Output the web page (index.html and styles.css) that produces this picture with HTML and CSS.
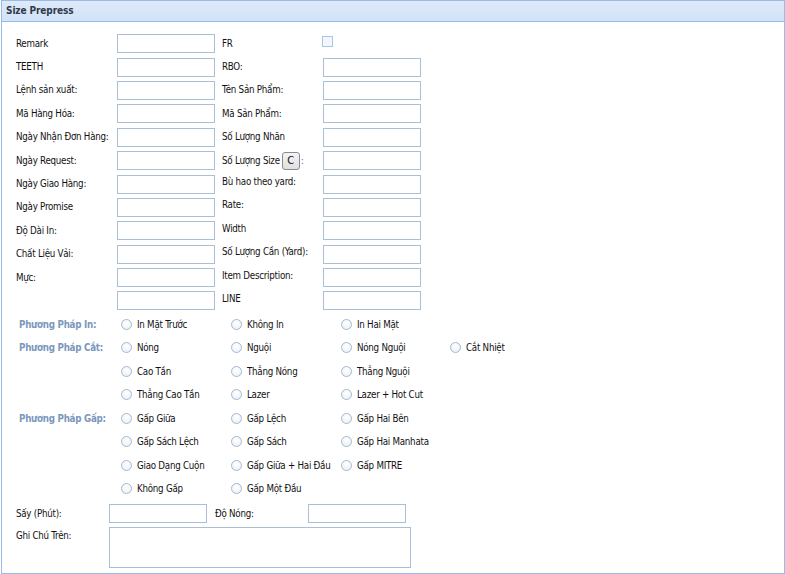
FILE: index.html
```html
<!DOCTYPE html>
<html lang="vi">
<head>
<meta charset="utf-8">
<title>Size Prepress</title>
<link rel="stylesheet" href="styles.css">
</head>
<body>
<div class="panel">
  <div class="panel-header">Size Prepress</div>
  <div class="panel-body">
    <div class="fields">
      <label class="lbl">Remark</label><input class="txt" type="text">
      <label class="lbl lbl-r">FR</label><span class="chk"></span>
      <label class="lbl">TEETH</label><input class="txt" type="text">
      <label class="lbl lbl-r">RBO:</label><input class="txt" type="text">
      <label class="lbl">Lệnh sản xuất:</label><input class="txt" type="text">
      <label class="lbl lbl-r">Tên Sản Phẩm:</label><input class="txt" type="text">
      <label class="lbl">Mã Hàng Hóa:</label><input class="txt" type="text">
      <label class="lbl lbl-r">Mã Sản Phẩm:</label><input class="txt" type="text">
      <label class="lbl">Ngày Nhận Đơn Hàng:</label><input class="txt" type="text">
      <label class="lbl lbl-r">Số Lượng Nhãn</label><input class="txt" type="text">
      <label class="lbl">Ngày Request:</label><input class="txt" type="text">
      <label class="lbl lbl-r lbl-btn">Số Lượng Size <span class="btn">C</span><span class="colon">:</span></label><input class="txt" type="text">
      <label class="lbl">Ngày Giao Hàng:</label><input class="txt" type="text">
      <label class="lbl lbl-r up">Bù hao theo yard:</label><input class="txt" type="text">
      <label class="lbl">Ngày Promise</label><input class="txt" type="text">
      <label class="lbl lbl-r up">Rate:</label><input class="txt" type="text">
      <label class="lbl">Độ Dài In:</label><input class="txt" type="text">
      <label class="lbl lbl-r up">Width</label><input class="txt" type="text">
      <label class="lbl">Chất Liệu Vải:</label><input class="txt" type="text">
      <label class="lbl lbl-r up">Số Lượng Cần (Yard):</label><input class="txt" type="text">
      <label class="lbl">Mực:</label><input class="txt" type="text">
      <label class="lbl lbl-r up">Item Description:</label><input class="txt" type="text">
      <label class="lbl"></label><input class="txt" type="text">
      <label class="lbl lbl-r up">LINE</label><input class="txt" type="text">
    </div>

    <div class="radios">
      <div class="grp">Phương Pháp In:</div>
      <div class="opt"><span class="rd"></span>In Mặt Trước</div>
      <div class="opt"><span class="rd"></span>Không In</div>
      <div class="opt"><span class="rd"></span>In Hai Mặt</div>
      <div class="opt"></div>

      <div class="grp">Phương Pháp Cắt:</div>
      <div class="opt"><span class="rd"></span>Nóng</div>
      <div class="opt"><span class="rd"></span>Nguội</div>
      <div class="opt"><span class="rd"></span>Nóng Nguội</div>
      <div class="opt"><span class="rd"></span>Cắt Nhiệt</div>

      <div class="grp"></div>
      <div class="opt"><span class="rd"></span>Cao Tần</div>
      <div class="opt"><span class="rd"></span>Thẳng Nóng</div>
      <div class="opt"><span class="rd"></span>Thẳng Nguội</div>
      <div class="opt"></div>

      <div class="grp"></div>
      <div class="opt"><span class="rd"></span>Thẳng Cao Tần</div>
      <div class="opt"><span class="rd"></span>Lazer</div>
      <div class="opt"><span class="rd"></span>Lazer + Hot Cut</div>
      <div class="opt"></div>

      <div class="grp">Phương Pháp Gấp:</div>
      <div class="opt"><span class="rd"></span>Gấp Giữa</div>
      <div class="opt"><span class="rd"></span>Gấp Lệch</div>
      <div class="opt"><span class="rd"></span>Gấp Hai Bên</div>
      <div class="opt"></div>

      <div class="grp"></div>
      <div class="opt"><span class="rd"></span>Gấp Sách Lệch</div>
      <div class="opt"><span class="rd"></span>Gấp Sách</div>
      <div class="opt"><span class="rd"></span>Gấp Hai Manhata</div>
      <div class="opt"></div>

      <div class="grp"></div>
      <div class="opt"><span class="rd"></span>Giao Dạng Cuộn</div>
      <div class="opt"><span class="rd"></span>Gấp Giữa + Hai Đầu</div>
      <div class="opt"><span class="rd"></span>Gấp MITRE</div>
      <div class="opt"></div>

      <div class="grp"></div>
      <div class="opt"><span class="rd"></span>Không Gấp</div>
      <div class="opt"><span class="rd"></span>Gấp Một Đầu</div>
      <div class="opt"></div>
      <div class="opt"></div>
    </div>

    <div class="bottom">
      <label class="lbl">Sấy (Phút):</label><input class="txt" type="text">
      <label class="lbl">Độ Nóng:</label><input class="txt" type="text">
      <label class="lbl lbl-top">Ghi Chú Trên:</label><textarea class="area"></textarea>
    </div>
  </div>
</div>
</body>
</html>
```

FILE: styles.css
```css
* { box-sizing: border-box; }
html, body { margin: 0; padding: 0; background: #fff; }
body {
  font-family: "DejaVu Sans Condensed", "DejaVu Sans", sans-serif;
  font-size: 9.7px;
  letter-spacing: -0.25px;
  color: #111;
}
.panel {
  margin-left: 1px;
  height: 574px;
  border: 1px solid #99bbe8;
}
.panel-header {
  height: 21px;
  background: linear-gradient(#dfeaf9, #d1e2f8);
  border-bottom: 1px solid #99bbe8;
  font-weight: bold;
  color: #2f3a4a;
  padding: 4px 0 0 4px;
  font-size: 10px;
  letter-spacing: -0.1px;
}
.panel-body {
  padding: 10px 0 0 14px;
}
.fields {
  display: grid;
  grid-template-columns: 101px 105px 101px 98px;
  grid-auto-rows: 23.4px;
  align-items: center;
}
.lbl {
  white-space: nowrap;
  line-height: 12px;
}
.up { position: relative; top: -2px; }
.txt {
  width: 98px;
  height: 19px;
  border: 1px solid #a9bfd6;
  background: #fff;
  margin: 0;
  padding: 0 3px;
  font: inherit;
}
.chk {
  width: 11px;
  height: 11px;
  margin-left: -1px;
  border: 1px solid #a8c4e6;
  background: #f3f6fa;
  position: relative;
  top: -2px;
}
.lbl-btn { display: flex; align-items: center; }
.btn {
  display: inline-flex;
  align-items: center;
  justify-content: center;
  width: 18px;
  height: 18px;
  margin-left: 2px;
  border: 1px solid #8a8a8a;
  border-radius: 3px;
  background: linear-gradient(#f4f4f4, #e0e0e0);
  font-size: 11px;
  letter-spacing: 0;
  color: #111;
}
.colon { color: #4a78c8; margin-left: 1px; }
.radios {
  display: grid;
  grid-template-columns: 105px 110px 110px 109px 110px;
  grid-auto-rows: 23.45px;
  align-items: center;
  margin-top: 0;
}
.grp {
  grid-column: 1;
  font-weight: bold;
  color: #7b97bd;
  white-space: nowrap;
  padding-left: 3px;
}
.opt {
  display: flex;
  align-items: center;
  white-space: nowrap;
}
.rd {
  width: 11px;
  height: 11px;
  border-radius: 50%;
  border: 1px solid #a5b8cf;
  background: radial-gradient(circle at 50% 35%, #ffffff, #e8eef5);
  margin-right: 5px;
  flex: none;
}
.bottom {
  display: grid;
  grid-template-columns: 93px 106px 93px 98px;
  grid-template-rows: 19px 41px;
  row-gap: 4px;
  align-items: center;
  margin-top: 4px;
}
.lbl-top { align-self: start; padding-top: 3px; }
.area {
  grid-column: 2 / span 3;
  width: 302px;
  height: 41px;
  border: 1px solid #a9bfd6;
  margin: 0;
  resize: none;
  font: inherit;
}
```
